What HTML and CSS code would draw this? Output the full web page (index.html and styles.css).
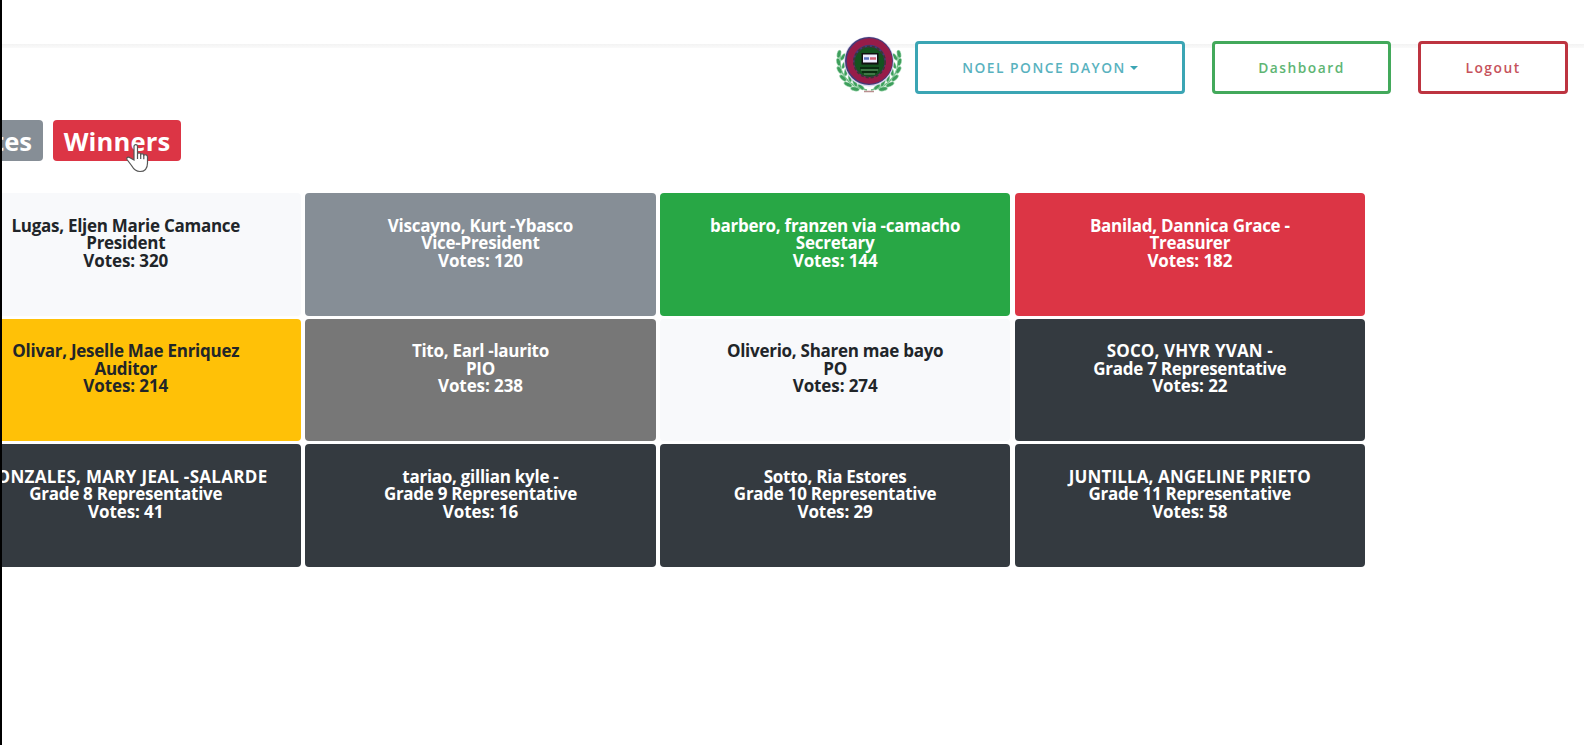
FILE: index.html
```
<!DOCTYPE html>
<html lang="en">
<head>
<meta charset="utf-8">
<title>Winners</title>
<link rel="stylesheet" href="styles.css">
</head>
<body>
<header class="topbar">
  <svg class="logo" width="66" height="60" viewBox="0 0 66 60">
    <path class="backing" d="M6 17C-1 36 10 53 33 56C56 53 67 36 60 17"/>
    <defs>
      <g id="branch">
        <path class="stem" d="M4.500 20C1 37 12 52 31 55"/>
        <g class="leaf">
          <ellipse cx="3" cy="19" rx="2" ry="4" transform="rotate(12 3 19)"/>
          <ellipse cx="7" cy="22" rx="1.800" ry="4" transform="rotate(35 7 22)"/>
          <ellipse cx="2.500" cy="27" rx="2" ry="4" transform="rotate(-15 2.500 27)"/>
          <ellipse cx="8" cy="30" rx="1.800" ry="4" transform="rotate(25 8 30)"/>
          <ellipse cx="3.500" cy="35" rx="2" ry="4" transform="rotate(-30 3.500 35)"/>
          <ellipse cx="10" cy="37" rx="1.800" ry="4" transform="rotate(10 10 37)"/>
          <ellipse cx="7" cy="43" rx="2" ry="4.300" transform="rotate(-48 7 43)"/>
          <ellipse cx="14" cy="43" rx="1.800" ry="4" transform="rotate(-8 14 43)"/>
          <ellipse cx="12" cy="49.500" rx="2" ry="4.500" transform="rotate(-65 12 49.500)"/>
          <ellipse cx="19" cy="48" rx="1.800" ry="4" transform="rotate(-25 19 48)"/>
          <ellipse cx="19" cy="54" rx="2" ry="4.500" transform="rotate(-80 19 54)"/>
          <ellipse cx="25" cy="52" rx="1.800" ry="4" transform="rotate(-50 25 52)"/>
        </g>
      </g>
    </defs>
    <use href="#branch"/>
    <use href="#branch" transform="translate(66 0) scale(-1 1)"/>
    <path class="ribbon" d="M28 56.500h10"/>
    <circle class="halo" cx="33" cy="26.500" r="25"/>
    <circle class="rim" cx="33" cy="26" r="24"/>
    <circle class="ring" cx="33.500" cy="26" r="19.500"/>
    <circle class="core" cx="33.500" cy="27" r="15"/>
    <circle class="dots" cx="33.500" cy="27" r="15.500"/>
    <rect x="25.500" y="18" width="17" height="11.500" fill="#111"/>
    <rect x="27" y="19.500" width="14" height="8" fill="#eef"/>
    <path d="M28 23.500h5" stroke="#5a75c0" stroke-width="2.500"/>
    <path d="M34 23.500h6" stroke="#d46478" stroke-width="2.500"/>
    <path d="M24 33h19M26 37h15" stroke="#092c10" stroke-width="2"/>
    <path d="M25 35h17M28 39h11" stroke="#6b9a6e" stroke-width="1"/>
  </svg>
  <button class="btn user"><span>NOEL PONCE DAYON</span><i class="caret"></i></button>
  <button class="btn dash"><span>Dashboard</span></button>
  <button class="btn logout"><span>Logout</span></button>
</header>
<nav class="tabs">
  <span class="tab votes">Votes</span>
  <span class="tab win">Winners</span>
  <svg class="hand" width="26" height="32" viewBox="0 0 26 32"><path d="M9 18V4.500C9 2 12.500 2 12.500 4.500V12C13 10.500 15.500 10.700 15.700 12.500C16.500 11.200 18.700 11.700 18.800 13.300C20 12.200 22.500 12.800 22.500 15V21C22.500 27 19.500 29.500 15 29.500C10.500 29.500 8.500 27 6.500 23.500L2 17.500C1 15.500 3.500 14.500 5 15.800Z"/><path class="fingers" d="M12.500 12v5M15.700 12.500v4.500M18.800 13.300v4"/></svg>
</nav>
<main class="grid">
  <div class="card light"><p>Lugas, Eljen Marie Camance</p><p>President</p><p class="count">Votes: 320</p></div>
  <div class="card slate"><p>Viscayno, Kurt -Ybasco</p><p>Vice-President</p><p class="count">Votes: 120</p></div>
  <div class="card green"><p>barbero, franzen via -camacho</p><p>Secretary</p><p class="count">Votes: 144</p></div>
  <div class="card red"><p>Banilad, Dannica Grace -</p><p>Treasurer</p><p class="count">Votes: 182</p></div>
  <div class="card yellow"><p>Olivar, Jeselle Mae Enriquez</p><p>Auditor</p><p class="count">Votes: 214</p></div>
  <div class="card gray"><p>Tito, Earl -laurito</p><p>PIO</p><p class="count">Votes: 238</p></div>
  <div class="card light"><p>Oliverio, Sharen mae bayo</p><p>PO</p><p class="count">Votes: 274</p></div>
  <div class="card dark"><p class="caps">SOCO, VHYR YVAN -</p><p>Grade 7 Representative</p><p class="count">Votes: 22</p></div>
  <div class="card dark"><p class="caps wide">GONZALES, MARY JEAL -SALARDE</p><p>Grade 8 Representative</p><p class="count">Votes: 41</p></div>
  <div class="card dark"><p>tariao, gillian kyle -</p><p>Grade 9 Representative</p><p class="count">Votes: 16</p></div>
  <div class="card dark"><p>Sotto, Ria Estores</p><p>Grade 10 Representative</p><p class="count">Votes: 29</p></div>
  <div class="card dark"><p class="caps">JUNTILLA, ANGELINE PRIETO</p><p>Grade 11 Representative</p><p class="count">Votes: 58</p></div>
</main>
</body>
</html>
```
FILE: styles.css
```
* { box-sizing: border-box; }
body { margin: 0; height: 745px; overflow: hidden; background: #fff; border-left: 2px solid #000; font-family: "Open Sans", "Noto Sans", sans-serif; }
.topbar { height: 120px; padding: 35px 16px 0 0; display: flex; justify-content: flex-end; align-items: flex-start; background: linear-gradient(#f3f3f3, #fafafa) 0 44px / 100% 4px no-repeat; }
.logo { margin-right: 13px; }
.backing { fill: #fff; stroke: #fff; stroke-width: 9; }
.stem { fill: none; stroke: #6dbd84; stroke-width: 1.500; }
.leaf { fill: #3d9e5b; stroke: #c4ead0; stroke-width: .500; }
.ribbon { stroke: #b98f8f; stroke-width: 1.500; }
.halo { fill: #d9d6ee; }
.rim { fill: #443a78; }
.ring { fill: none; stroke: #971c49; stroke-width: 6.500; }
.core { fill: #14531f; }
.dots { fill: none; stroke: #3d3538; stroke-width: 2; stroke-dasharray: 3 2; }
.btn { height: 53px; margin: 6px 0 0; padding: 0; display: flex; align-items: center; justify-content: center; border: 3px solid; border-radius: 4px; background: #fff; font: 600 13.800px "Open Sans", sans-serif; letter-spacing: 1.500px; }
.btn span { opacity: .85; }
.user { width: 270px; color: #3ba5b4; }
.dash { width: 179px; margin-left: 27px; color: #43a95b; }
.logout { width: 150px; margin-left: 27px; color: #bd3440; }
.caret { margin-left: 4px; border: 4px solid transparent; border-top-color: currentColor; border-bottom: 0; }
.tabs { position: relative; height: 73px; display: flex; align-items: flex-start; gap: 10px; }
.tab { height: 41px; border-radius: 4px; color: #fff; font-weight: 700; font-size: 25.600px; line-height: 43px; }
.votes { width: 41px; padding-right: 11px; display: flex; justify-content: flex-end; overflow: hidden; background: #868e96; border-radius: 0 4px 4px 0; }
.win { width: 128px; text-align: center; background: #dc3545; letter-spacing: .150px; }
.hand { position: absolute; left: 123px; top: 22px; fill: #fff; stroke: #555; stroke-width: 1.200; }
.fingers { fill: none; }
.grid { margin-left: -51.500px; display: grid; grid-template-columns: repeat(4, 350.500px); grid-auto-rows: 122.600px; gap: 3px 4.200px; }
.card { padding-top: 23.500px; border-radius: 4px; color: #fff; text-align: center; font-size: 17px; font-weight: 700; line-height: 17.600px; letter-spacing: -.270px; white-space: nowrap; }
.card p { margin: 0; }
.card .count { letter-spacing: -.100px; }
.card .caps { letter-spacing: .130px; }
.card .wide { letter-spacing: .300px; }
.light { background: #f8f9fb; color: #212529; }
.slate { background: #868e96; }
.green { background: #28a745; }
.red { background: #dc3545; }
.yellow { background: #ffc107; color: #212529; }
.gray { background: #777; }
.dark { background: #343a40; }
```
